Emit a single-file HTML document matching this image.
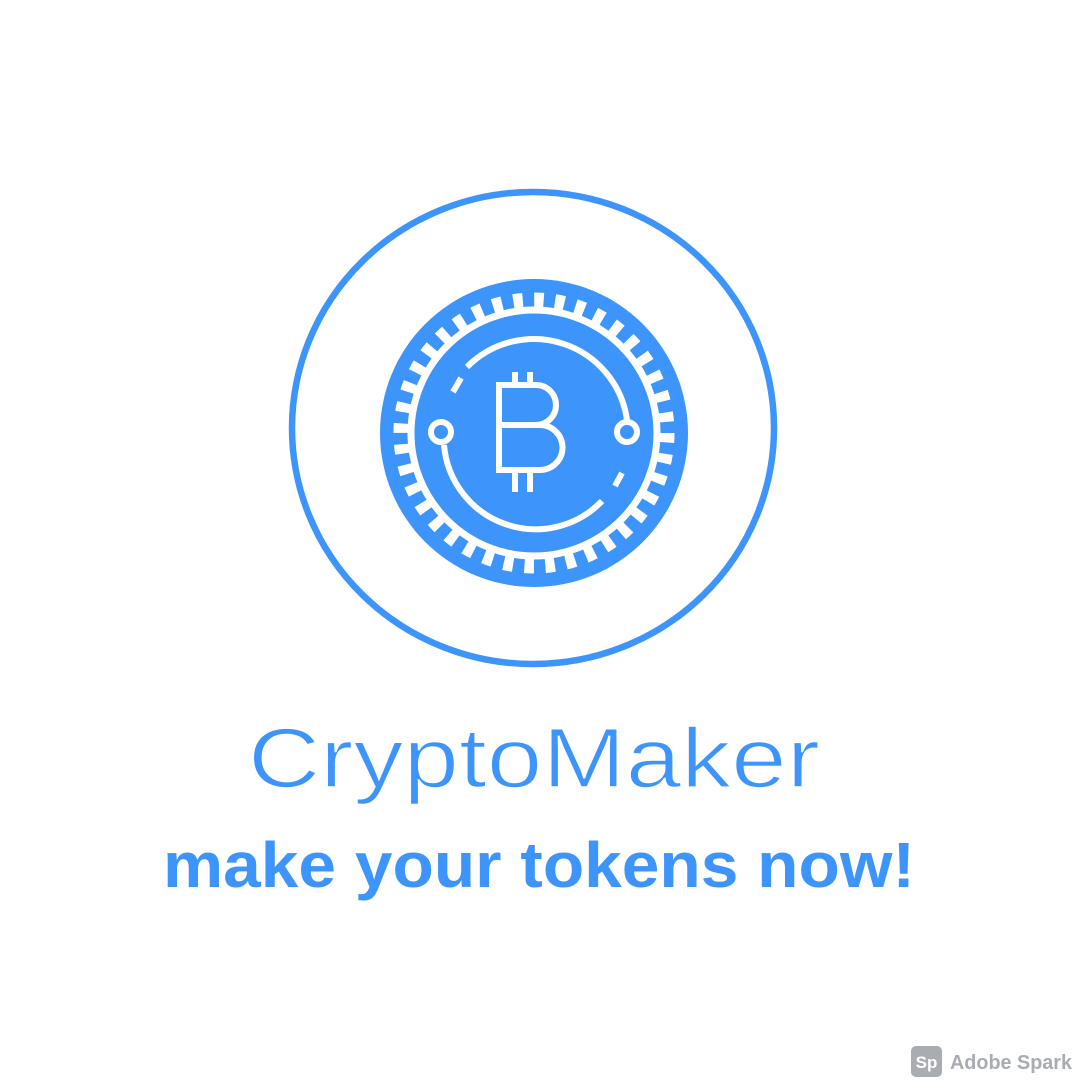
<!DOCTYPE html>
<html><head><meta charset="utf-8"><style>html,body{margin:0;padding:0;background:#fff}svg{display:block}</style></head>
<body>
<svg width="1080" height="1080" viewBox="0 0 1080 1080" xmlns="http://www.w3.org/2000/svg">
<rect width="1080" height="1080" fill="#fff"/>
<ellipse cx="533" cy="428" rx="241" ry="236" fill="none" stroke="#3d94fb" stroke-width="6.5"/>
<circle cx="534" cy="433" r="154" fill="#3d94fb"/>
<circle cx="534" cy="433" r="133" fill="none" stroke="#fff" stroke-width="15" stroke-dasharray="9.5 11.39"/>
<circle cx="534" cy="433" r="123" fill="none" stroke="#fff" stroke-width="7"/>
<g fill="none" stroke="#fff" stroke-width="6">
<path d="M467 367 A94 94 0 0 1 627 420"/>
<path d="M444 445 A92 92 0 0 0 602 501"/>
<path d="M461 378 L453 392"/>
<path d="M622 473 L615 486"/>
<circle cx="441" cy="432" r="10"/>
<circle cx="627" cy="432" r="10"/>
<path d="M499 385 H536 A20 20 0 0 1 536 425 H499 Z M499 425 H540 A22 22 0 0 1 540 470 H499 Z"/>
<path d="M515 385 V372 M530 385 V372 M515 470 V492 M530 470 V492"/>
</g>
<text x="534" y="787" text-anchor="middle" font-family="Liberation Sans, sans-serif" font-size="84" fill="#3d94fb" stroke="#fff" stroke-width="1.6" textLength="572" lengthAdjust="spacingAndGlyphs">CryptoMaker</text>
<text x="539" y="887" text-anchor="middle" font-family="Liberation Sans, sans-serif" font-weight="bold" font-size="64" fill="#3d94fb" textLength="752" lengthAdjust="spacingAndGlyphs">make your tokens now!</text>
<rect x="911" y="1046" width="31" height="31" rx="5" fill="#a9adb2"/>
<text x="926.5" y="1068" text-anchor="middle" font-family="Liberation Sans, sans-serif" font-weight="bold" font-size="17" fill="#fff">Sp</text>
<text x="950" y="1069" font-family="Liberation Sans, sans-serif" font-weight="bold" font-size="20" fill="#a9adb2" textLength="122" lengthAdjust="spacingAndGlyphs">Adobe Spark</text>
</svg>
</body></html>
